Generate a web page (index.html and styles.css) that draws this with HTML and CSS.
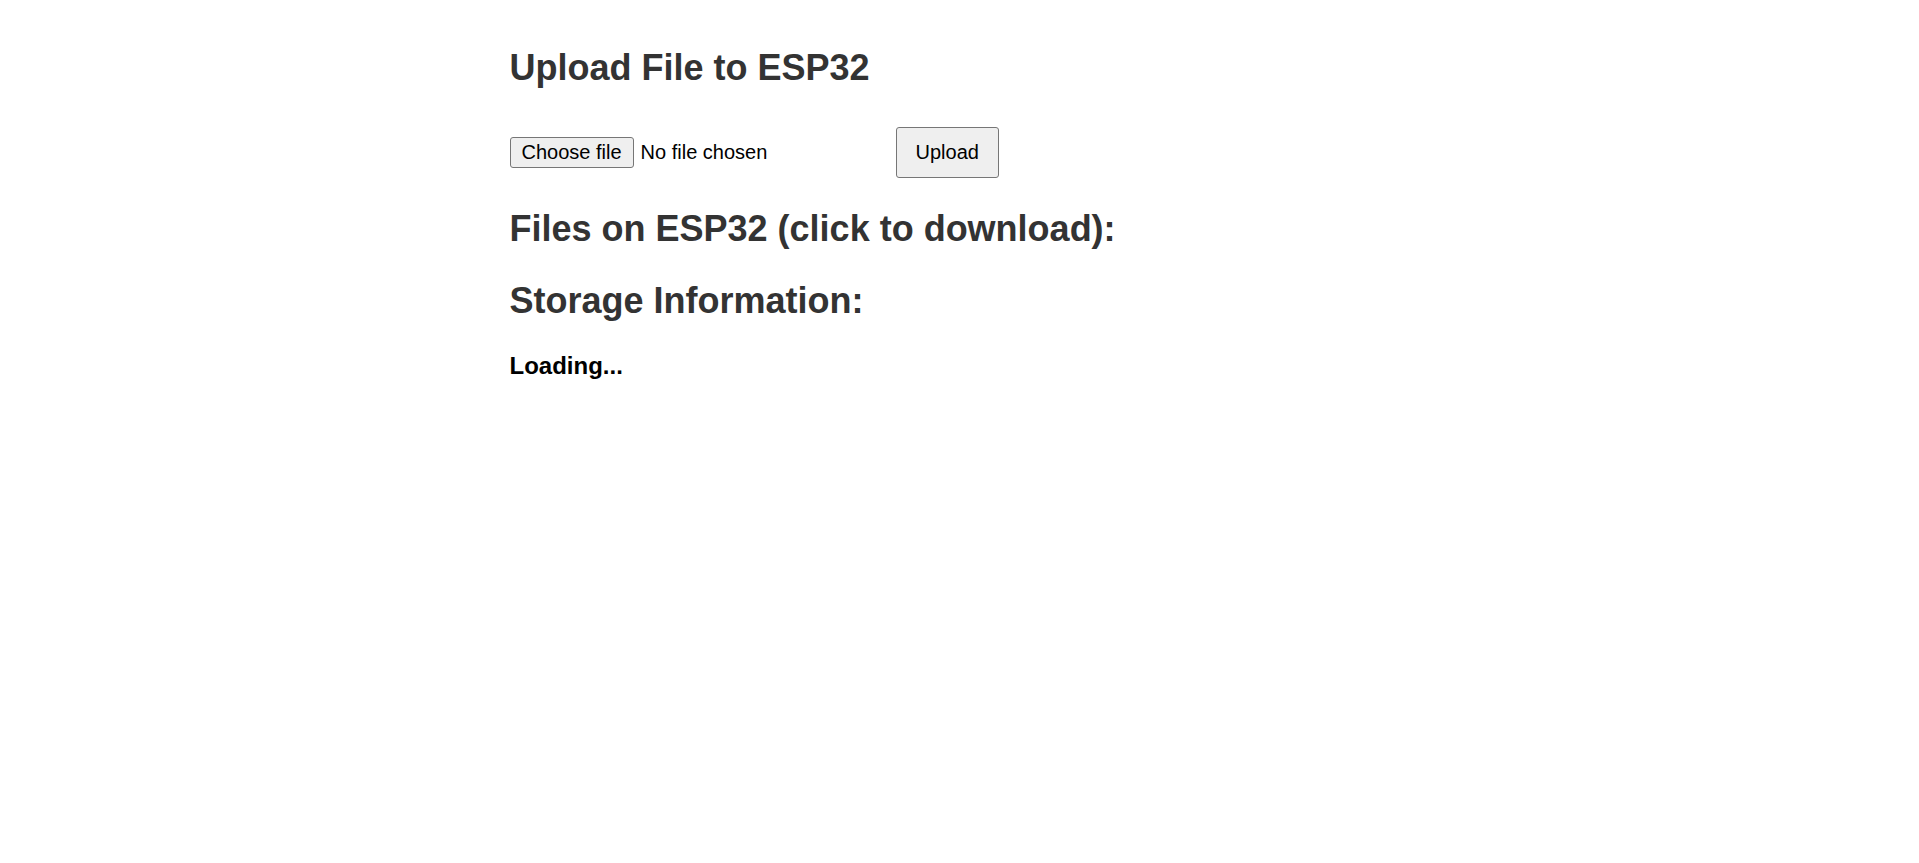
FILE: index.html
```html
<!DOCTYPE html>
<html>
<head>
<meta charset="utf-8">
<title>ESP32 File Manager</title>
<link rel="stylesheet" href="styles.css">
</head>
<body>
<h1 class="title">Upload File to ESP32</h1>
<form class="upload-form">
  <label class="file-picker">
    <input class="file-native" type="file" name="file">
    <span class="file-btn">Choose file</span>
    <span class="file-name">No file chosen</span>
  </label>
  <button class="upload-btn" type="button">Upload</button>
</form>
<h2 class="section files-title">Files on ESP32 (click to download):</h2>
<ul class="file-list"></ul>
<h2 class="section storage-title">Storage Information:</h2>
<p class="storage">Loading...</p>
</body>
</html>
```
FILE: styles.css
```css
body {
  font-family: Arial, "Liberation Sans", sans-serif;
  font-size: 24px;
  color: #000;
  max-width: 900px;
  margin: 0 auto;
  padding: 47px 30px 30px;
  background: #fff;
}
.title {
  font-size: 36px;
  font-weight: bold;
  color: #333;
  margin: 0 0 38px;
}
.upload-form {
  display: flex;
  align-items: center;
  gap: 6px;
  margin: 0 0 30px;
}
.file-picker {
  display: flex;
  align-items: center;
  width: 380px;
  font-size: 20px;
  line-height: 23px;
  cursor: default;
}
.file-native {
  display: none;
}
.file-btn {
  display: inline-block;
  padding: 3px 11px;
  border: 1px solid #767676;
  border-radius: 3px;
  background: #efefef;
  color: #000;
  margin-right: 7px;
}
.file-name {
  color: #000;
}
.upload-btn {
  font-family: Arial, "Liberation Sans", sans-serif;
  font-size: 20px;
  line-height: 23px;
  padding: 13px 19px;
  border: 1px solid #767676;
  border-radius: 3px;
  background: #efefef;
  color: #000;
}
.section {
  font-size: 36px;
  font-weight: bold;
  color: #333;
}
.files-title {
  margin: 0 0 30px;
}
.file-list {
  margin: 0;
  padding: 0;
  list-style: none;
}
.storage-title {
  margin: 0 0 30px;
}
.storage {
  font-size: 24px;
  font-weight: bold;
  margin: 0;
}
```
